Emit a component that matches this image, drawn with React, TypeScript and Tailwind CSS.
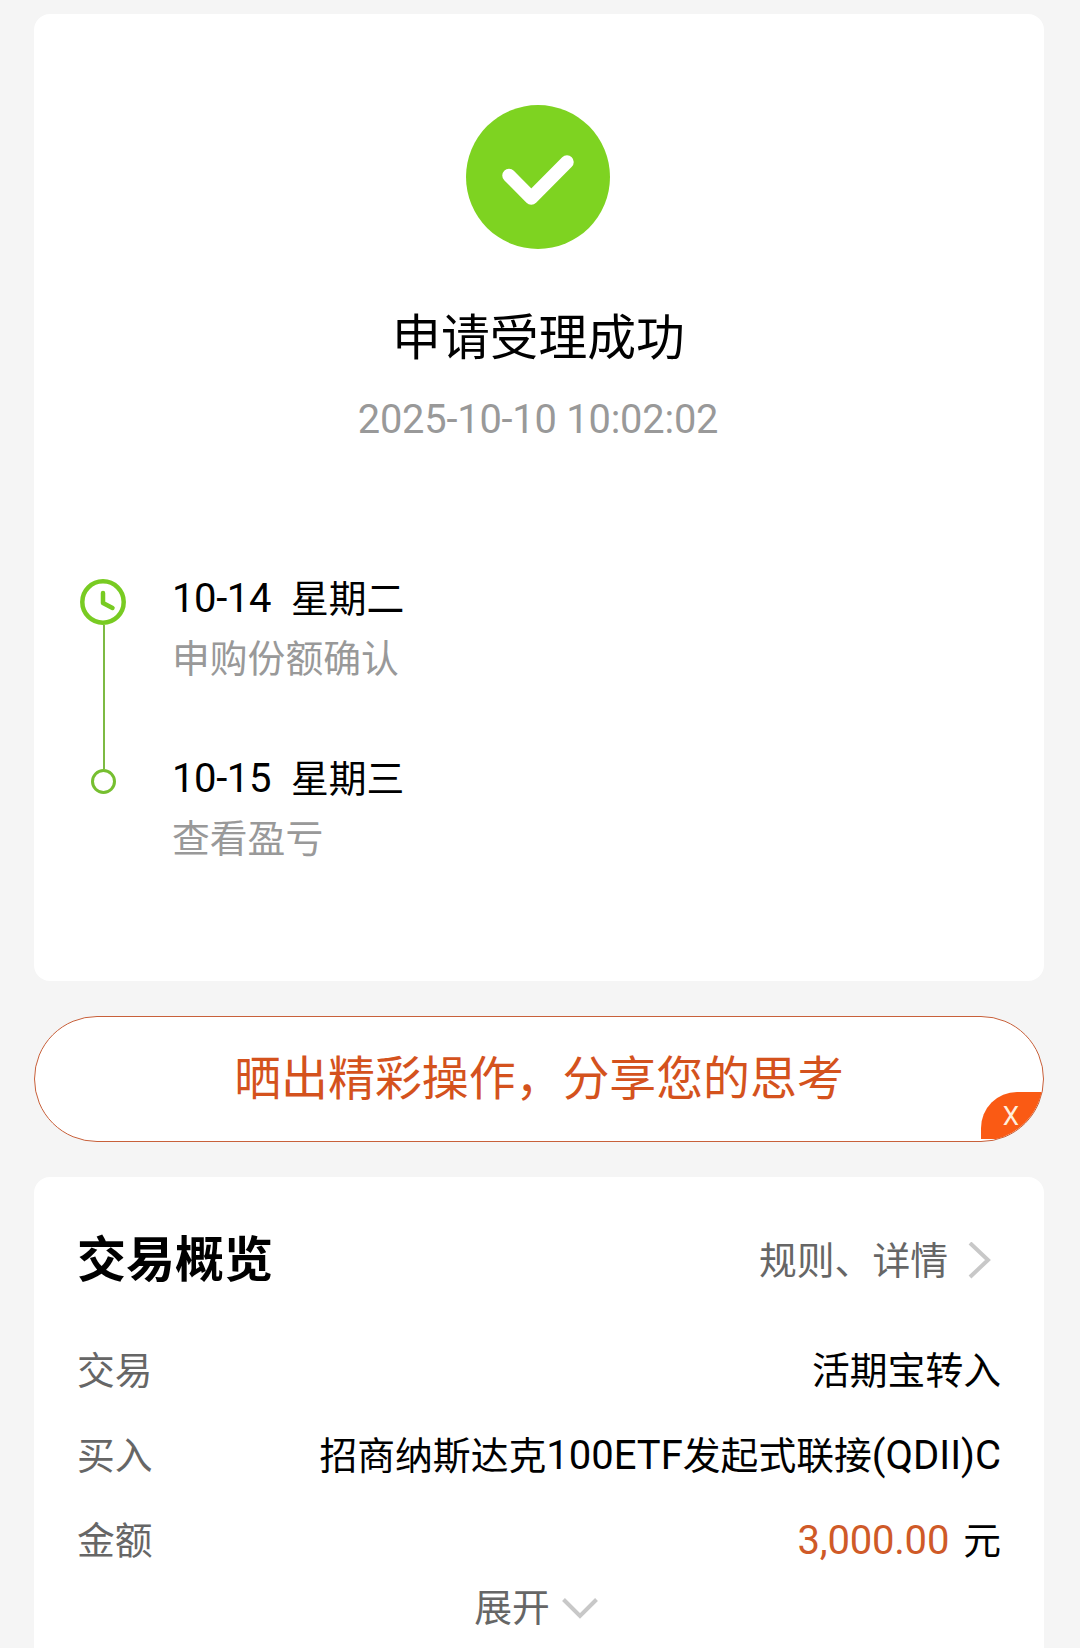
import { FC, ReactNode } from 'react';

interface OverviewRowProps {
    label: string;
    children: ReactNode;
}

interface StepProps {
    date: string;
    weekday: string;
    description: string;
}

const Step: FC<StepProps> = ({ date, weekday, description }) => {
    return (
        <li className="h-[180px]">
            <div className="flex h-[60px] items-center gap-[20px] leading-[60px] text-black">
                <span className="text-[40px] tracking-[-0.4px]">{date}</span>
                <span>{weekday}</span>
            </div>
            <div className="leading-[60px] text-[#999999]">{description}</div>
        </li>
    );
};

const OverviewRow: FC<OverviewRowProps> = ({ label, children }) => {
    return (
        <li className="flex h-[85px] items-center justify-between leading-[60px]">
            <span className="text-[#666666]">{label}</span>
            <span className="flex items-baseline text-black">{children}</span>
        </li>
    );
};

const App: FC = () => {
    return (
        <div className="flex h-[1648px] w-[1080px] flex-col gap-[35px] overflow-hidden bg-[#f5f5f5] pt-[14px] pr-[36px] pl-[34px] font-['Roboto','Noto_Sans_CJK_SC',sans-serif] text-[37.8px]">
            <section className="h-[967px] shrink-0 rounded-[16px] bg-white pt-[91px]">
                <div className="flex flex-col items-center pr-[2px]">
                    <svg className="size-[144px]" viewBox="0 0 144 144" fill="none">
                        <circle cx="72" cy="72" r="72" fill="#7ed321" />
                        <path d="M43 70.5 65.3 93 101 57" stroke="#fff" strokeWidth="13.5" strokeLinecap="round" strokeLinejoin="round" />
                    </svg>
                    <h1 className="mt-[54px] ml-px text-[48.8px] leading-[72px] text-black">申请受理成功</h1>
                    <p className="mt-[17px] text-[39.8px] leading-[56px] tracking-[-0.2px] text-[#999999]">2025-10-10 10:02:02</p>
                </div>
                <div className="mt-[121px] flex gap-[46px] pl-[46px]">
                    <div className="flex w-[46px] flex-col items-center pt-[10px]">
                        <svg className="size-[46px]" viewBox="0 0 46 46" fill="none" stroke="#78cb22" strokeWidth="4.5">
                            <circle cx="23" cy="23" r="20.7" />
                            <path d="M23 14V24L32.5 29" strokeLinecap="round" strokeLinejoin="round" />
                        </svg>
                        <div className="ml-[2px] h-[144px] w-[2px] bg-[#7dba43]" />
                        <div className="ml-px size-[25px] rounded-full border-[3px] border-[#76bf30]" />
                    </div>
                    <ul>
                        <Step date="10-14" weekday="星期二" description="申购份额确认" />
                        <Step date="10-15" weekday="星期三" description="查看盈亏" />
                    </ul>
                </div>
            </section>

            <button className="relative h-[126px] shrink-0 overflow-hidden rounded-full border border-[#c8603a] bg-white text-[46.9px] leading-[118px] text-[#d4521d]">
                晒出精彩操作，分享您的思考
                <span className="absolute right-0 bottom-[2px] h-[47px] w-[62px] rounded-tl-[36px] bg-[#fa5a14] pr-[2px] text-[26px] leading-[48px] text-[#ffeedd]">X</span>
            </button>

            <section className="flex-1 rounded-t-[16px] bg-white pr-[43px] pl-[43px]">
                <div className="flex items-center justify-between pt-[48px] pr-[10px]">
                    <h2 className="text-[49px] leading-[72px] font-bold text-black">交易概览</h2>
                    <div className="flex items-center gap-[19px] text-[#666666]">
                        规则、详情
                        <svg className="h-[38px] w-[24px]" viewBox="0 0 24 38" fill="none">
                            <path d="M3 1 21 18 3 35" stroke="#c8c8c8" strokeWidth="4" />
                        </svg>
                    </div>
                </div>
                <ul className="pt-[31px]">
                    <OverviewRow label="交易">活期宝转入</OverviewRow>
                    <OverviewRow label="买入">
                        招商纳斯达克<span className="text-[40px]">100ETF</span>发起式联接<span className="text-[40px]">(QDII)C</span>
                    </OverviewRow>
                    <OverviewRow label="金额">
                        <span className="mr-[14px] text-[40px] tracking-[-0.2px] text-[#cf5a28]">3,000.00</span>元
                    </OverviewRow>
                </ul>
                <div className="flex items-center justify-center gap-[12px] pr-[6px] leading-[50px] text-[#666666]">
                    展开
                    <svg className="h-[22px] w-[36px]" viewBox="0 0 36 22" fill="none">
                        <path d="M1.5 2.5 18 19 34.5 2.5" stroke="#c8c8c8" strokeWidth="4" />
                    </svg>
                </div>
            </section>
        </div>
    );
};

export default App;
